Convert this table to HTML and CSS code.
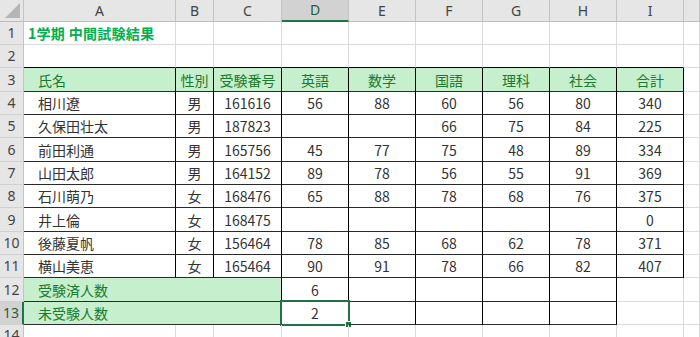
FILE: index.html
```html
<!DOCTYPE html>
<html lang="ja">
<head>
<meta charset="utf-8">
<title>1学期 中間試験結果</title>
<link rel="stylesheet" href="styles.css">
</head>
<body>
<div class="sheet">
  <!-- column headers -->
  <div class="c hdr corner"><span class="tri"></span></div>
  <div class="c hdr">A</div>
  <div class="c hdr">B</div>
  <div class="c hdr">C</div>
  <div class="c hdr hsel">D</div>
  <div class="c hdr">E</div>
  <div class="c hdr">F</div>
  <div class="c hdr">G</div>
  <div class="c hdr">H</div>
  <div class="c hdr">I</div>
  <div class="c hdr"></div>

  <!-- row 1 -->
  <div class="c rh">1</div>
  <div class="c title">1学期 中間試験結果</div>
  <div class="c"></div><div class="c"></div><div class="c"></div><div class="c"></div><div class="c"></div><div class="c"></div><div class="c"></div><div class="c"></div><div class="c"></div>

  <!-- row 2 -->
  <div class="c rh">2</div>
  <div class="c bb"></div><div class="c bb"></div><div class="c bb"></div><div class="c bb"></div><div class="c bb"></div><div class="c bb"></div><div class="c bb"></div><div class="c bb"></div><div class="c bb"></div>
  <div class="c"></div>

  <!-- row 3 -->
  <div class="c rh">3</div>
  <div class="c t hd ind">氏名</div>
  <div class="c t hd ctr">性別</div>
  <div class="c t hd ctr">受験番号</div>
  <div class="c t hd ctr">英語</div>
  <div class="c t hd ctr">数学</div>
  <div class="c t hd ctr">国語</div>
  <div class="c t hd ctr">理科</div>
  <div class="c t hd ctr">社会</div>
  <div class="c t hd ctr">合計</div>
  <div class="c"></div>

  <!-- row 4 -->
  <div class="c rh">4</div>
  <div class="c t ind">相川遼</div>
  <div class="c t ctr">男</div>
  <div class="c t ctr">161616</div>
  <div class="c t ctr">56</div>
  <div class="c t ctr">88</div>
  <div class="c t ctr">60</div>
  <div class="c t ctr">56</div>
  <div class="c t ctr">80</div>
  <div class="c t ctr">340</div>
  <div class="c"></div>

  <!-- row 5 -->
  <div class="c rh">5</div>
  <div class="c t ind">久保田壮太</div>
  <div class="c t ctr">男</div>
  <div class="c t ctr">187823</div>
  <div class="c t ctr"></div>
  <div class="c t ctr"></div>
  <div class="c t ctr">66</div>
  <div class="c t ctr">75</div>
  <div class="c t ctr">84</div>
  <div class="c t ctr">225</div>
  <div class="c"></div>

  <!-- row 6 -->
  <div class="c rh">6</div>
  <div class="c t ind">前田利通</div>
  <div class="c t ctr">男</div>
  <div class="c t ctr">165756</div>
  <div class="c t ctr">45</div>
  <div class="c t ctr">77</div>
  <div class="c t ctr">75</div>
  <div class="c t ctr">48</div>
  <div class="c t ctr">89</div>
  <div class="c t ctr">334</div>
  <div class="c"></div>

  <!-- row 7 -->
  <div class="c rh">7</div>
  <div class="c t ind">山田太郎</div>
  <div class="c t ctr">男</div>
  <div class="c t ctr">164152</div>
  <div class="c t ctr">89</div>
  <div class="c t ctr">78</div>
  <div class="c t ctr">56</div>
  <div class="c t ctr">55</div>
  <div class="c t ctr">91</div>
  <div class="c t ctr">369</div>
  <div class="c"></div>

  <!-- row 8 -->
  <div class="c rh">8</div>
  <div class="c t ind">石川萌乃</div>
  <div class="c t ctr">女</div>
  <div class="c t ctr">168476</div>
  <div class="c t ctr">65</div>
  <div class="c t ctr">88</div>
  <div class="c t ctr">78</div>
  <div class="c t ctr">68</div>
  <div class="c t ctr">76</div>
  <div class="c t ctr">375</div>
  <div class="c"></div>

  <!-- row 9 -->
  <div class="c rh">9</div>
  <div class="c t ind">井上倫</div>
  <div class="c t ctr">女</div>
  <div class="c t ctr">168475</div>
  <div class="c t ctr"></div>
  <div class="c t ctr"></div>
  <div class="c t ctr"></div>
  <div class="c t ctr"></div>
  <div class="c t ctr"></div>
  <div class="c t ctr">0</div>
  <div class="c"></div>

  <!-- row 10 -->
  <div class="c rh">10</div>
  <div class="c t ind">後藤夏帆</div>
  <div class="c t ctr">女</div>
  <div class="c t ctr">156464</div>
  <div class="c t ctr">78</div>
  <div class="c t ctr">85</div>
  <div class="c t ctr">68</div>
  <div class="c t ctr">62</div>
  <div class="c t ctr">78</div>
  <div class="c t ctr">371</div>
  <div class="c"></div>

  <!-- row 11 -->
  <div class="c rh">11</div>
  <div class="c t ind">横山美恵</div>
  <div class="c t ctr">女</div>
  <div class="c t ctr">165464</div>
  <div class="c t ctr">90</div>
  <div class="c t ctr">91</div>
  <div class="c t ctr">78</div>
  <div class="c t ctr">66</div>
  <div class="c t ctr">82</div>
  <div class="c t ctr">407</div>
  <div class="c"></div>

  <!-- row 12 -->
  <div class="c rh">12</div>
  <div class="c t hd ind merge">受験済人数</div>
  <div class="c t ctr">6</div>
  <div class="c t"></div>
  <div class="c t"></div>
  <div class="c t"></div>
  <div class="c t"></div>
  <div class="c"></div>
  <div class="c"></div>

  <!-- row 13 -->
  <div class="c rh rsel">13</div>
  <div class="c t hd ind merge">未受験人数</div>
  <div class="c t ctr active">2<span class="selbox"><span class="handle"></span></span></div>
  <div class="c t"></div>
  <div class="c t"></div>
  <div class="c t"></div>
  <div class="c t"></div>
  <div class="c"></div>
  <div class="c"></div>

  <!-- row 14 -->
  <div class="c rh">14</div>
  <div class="c"></div><div class="c"></div><div class="c"></div><div class="c"></div><div class="c"></div><div class="c"></div><div class="c"></div><div class="c"></div><div class="c"></div><div class="c"></div>
</div>
</body>
</html>
```

FILE: styles.css
```css
html, body {
  margin: 0;
  padding: 0;
  background: #ffffff;
}

body {
  width: 700px;
  height: 337px;
  overflow: hidden;
}

.sheet {
  display: grid;
  grid-template-columns: 24px 152px 38px 68px 67px 67px 67px 67px 67px 67px 1fr;
  grid-template-rows: 22px 23px 23px 24px 23px 23px 24px 23px 23px 24px 23px 23px 24px 23px 20px;
  width: 700px;
  height: 337px;
  font-family: "Noto Sans CJK JP", "Noto Sans", sans-serif;
  font-size: 14px;
  color: #333333;
}

.c {
  box-sizing: border-box;
  border-right: 1px solid #dcdcdc;
  border-bottom: 1px solid #dcdcdc;
  display: flex;
  align-items: center;
  white-space: nowrap;
  min-width: 0;
  line-height: 1;
  position: relative;
}

.hdr {
  background: #e6e6e6;
  border-right-color: #c4c4c4;
  border-bottom-color: #bcbcbc;
  justify-content: center;
  color: #444444;
  font-family: "Noto Sans", "Open Sans", sans-serif;
  font-size: 14px;
}

.hsel {
  background: #d2d2d2;
  border-bottom: 2px solid #217346;
  color: #1f5f3a;
}

.corner {
  overflow: hidden;
}

.tri {
  position: absolute;
  right: 3px;
  bottom: 3px;
  width: 0;
  height: 0;
  border-left: 15px solid transparent;
  border-bottom: 15px solid #b5b5b5;
}

.rh {
  background: #e6e6e6;
  border-right-color: #c4c4c4;
  border-bottom-color: #d0d0d0;
  justify-content: center;
  color: #444444;
  font-family: "Noto Sans", "Open Sans", sans-serif;
  font-size: 14px;
}

.rsel {
  background: #d2d2d2;
  border-right: 2px solid #217346;
  color: #1f5f3a;
}

.title {
  padding-left: 4px;
  font-weight: bold;
  color: #00b050;
  overflow: visible;
  letter-spacing: 0.3px;
}

.bb {
  border-bottom-color: #000000;
}

.t {
  border-right-color: #000000;
  border-bottom-color: #2a2a2a;
}

.hd {
  background: #c6efce;
  color: #1c7a2e;
}

.ctr {
  justify-content: center;
}

.ind {
  padding-left: 14px;
}

.merge {
  grid-column: 2 / span 3;
}

.selbox {
  position: absolute;
  left: -2px;
  top: -2px;
  right: -2px;
  bottom: -2px;
  border: 2px solid #217346;
  pointer-events: none;
}

.handle {
  position: absolute;
  right: -4px;
  bottom: -4px;
  width: 5px;
  height: 5px;
  background: #217346;
  border: 1px solid #ffffff;
}
```
